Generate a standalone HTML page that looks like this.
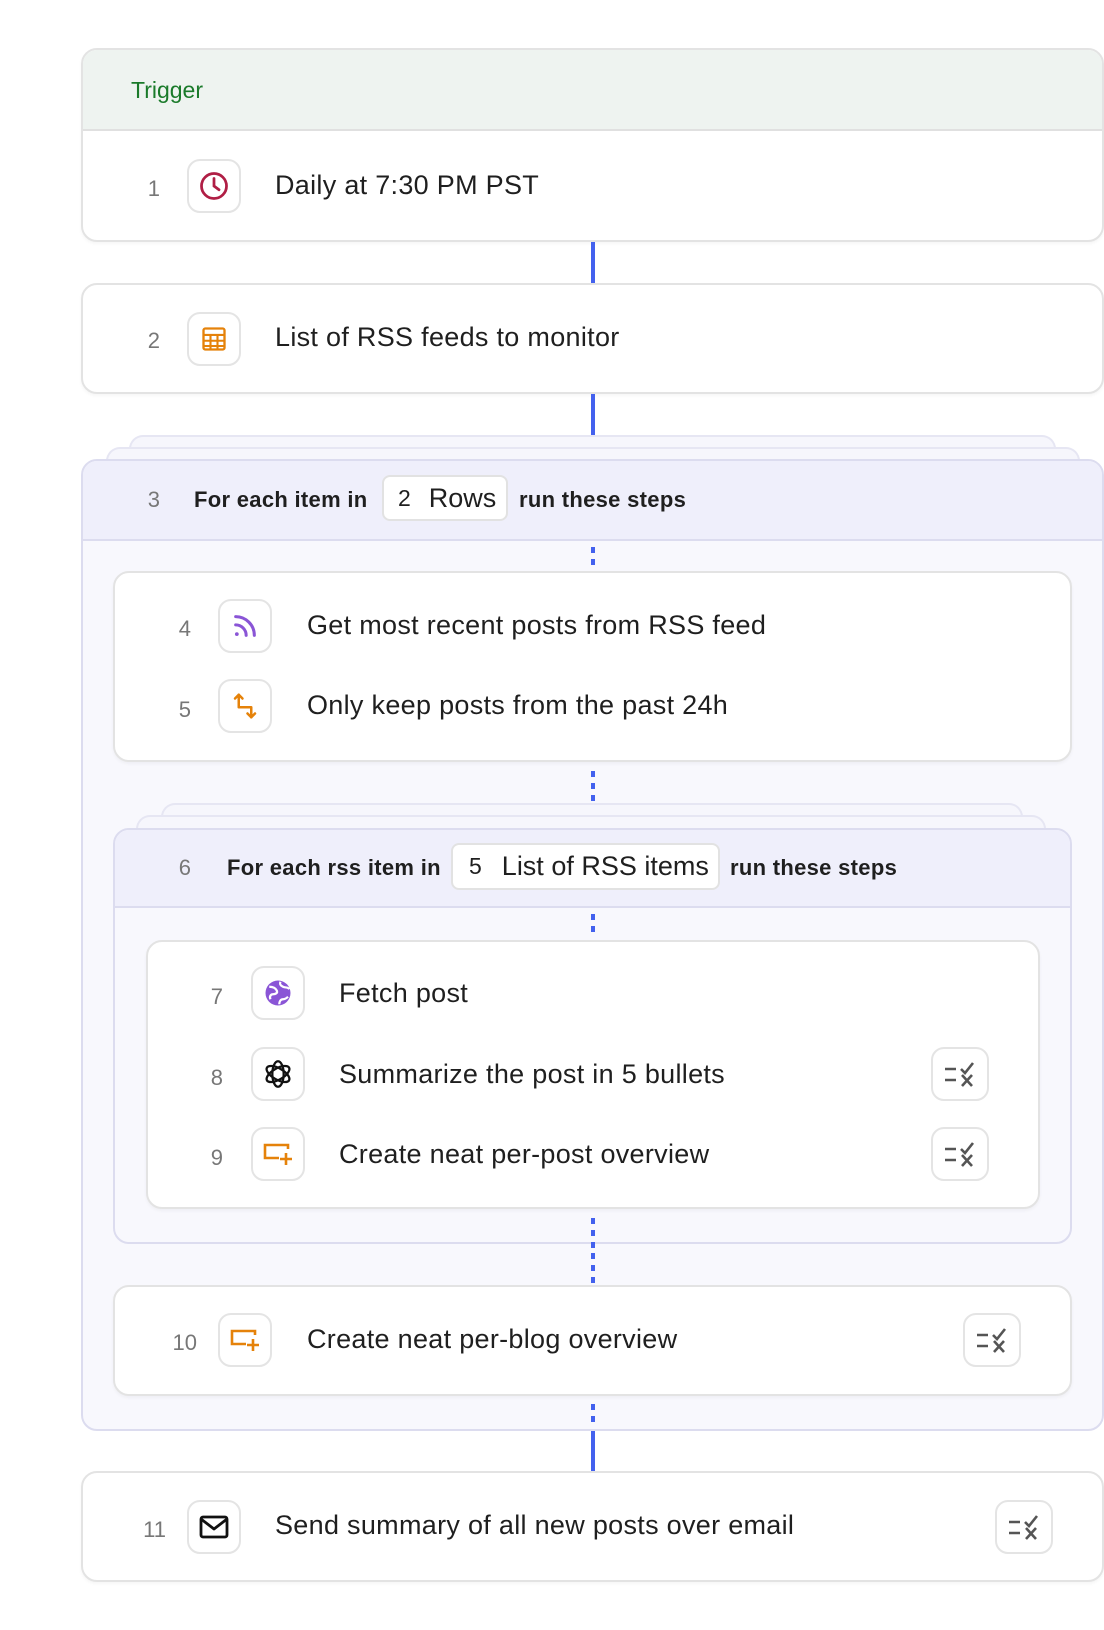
<!DOCTYPE html>
<html><head><meta charset="utf-8"><style>
*{box-sizing:border-box;margin:0;padding:0}
body{width:1104px;height:1630px;background:#fff;position:relative;font-family:"Liberation Sans",sans-serif;color:#1f1f1f;overflow:hidden}
.a{position:absolute}
.card{position:absolute;background:#fff;border:2px solid #e3e3e3;border-radius:16px;box-shadow:0 2px 3px rgba(0,0,0,.04)}
.loop{position:absolute;background:#f8f8fd;border:2px solid #dcdcef;border-radius:16px}
.lh{position:absolute;left:0;right:0;top:0;background:#efeffb;border-bottom:2px solid #dcdcef;border-radius:14px 14px 0 0}
.ghost{position:absolute;background:#f6f6fc;border:2px solid #e6e6f3;border-bottom:none;border-radius:14px 14px 0 0}
.num{position:absolute;font-size:22px;color:#777;text-align:right;width:40px}
.ib{position:absolute;width:54px;height:54px;border:2px solid #e4e4e4;border-radius:13px;background:#fff;display:flex;align-items:center;justify-content:center}
.ab{position:absolute;width:58px;height:54px;border:2px solid #e4e4e4;border-radius:13px;background:#fff;display:flex;align-items:center;justify-content:center}
.t{position:absolute;font-size:27px;letter-spacing:0.3px;color:#1f1f1f;white-space:nowrap}
.line{position:absolute;left:591px;width:4px;background:#4361ee}
.dot{position:absolute;left:591px;width:4px;background:repeating-linear-gradient(#4361ee 0 6px,transparent 6px 12px)}
.hd{position:absolute;font-size:22px;font-weight:bold;color:#1f1f1f;white-space:nowrap;letter-spacing:0.3px}
.pill{position:absolute;background:#fff;border:2px solid #e2e2e2;border-radius:8px;font-size:27px;white-space:nowrap;display:flex;align-items:center}
</style></head><body>

<div class="card" style="left:81px;top:48px;width:1023px;height:194px;overflow:hidden">
 <div class="a" style="left:0;right:0;top:0;height:81px;background:#eef3f0;border-bottom:2px solid #e0e0e0"></div>
 <div class="a" style="left:48px;top:27px;font-size:23px;color:#1a7a2a">Trigger</div>
</div>
<div class="num" style="left:120px;top:176px">1</div>
<div class="ib" style="left:187px;top:159px"><svg width="30" height="30" viewBox="0 0 24 24" fill="none" stroke="#b01e45" stroke-width="2.2" stroke-linecap="round"><circle cx="12" cy="12" r="10"/><path d="M12 6v6l4 3"/></svg></div>
<div class="t" style="left:275px;top:170px">Daily at 7:30 PM PST</div>

<div class="line" style="top:242px;height:41px"></div>

<div class="card" style="left:81px;top:283px;width:1023px;height:111px"></div>
<div class="num" style="left:120px;top:328px">2</div>
<div class="ib" style="left:187px;top:312px"><svg width="28" height="28" viewBox="0 0 24 24" fill="none" stroke="#e5820a" stroke-width="2"><rect x="3" y="3" width="18" height="18" rx="1.5"/><path d="M3 8.5h18M3 13.5h18M3 18h18M9 8.5v12.5M15 8.5v12.5" stroke-width="1.8"/></svg></div>
<div class="t" style="left:275px;top:322px">List of RSS feeds to monitor</div>

<div class="line" style="top:394px;height:42px"></div>

<div class="ghost" style="left:129px;top:435px;width:927px;height:30px"></div>
<div class="ghost" style="left:106px;top:447px;width:974px;height:30px"></div>
<div class="loop" style="left:81px;top:459px;width:1023px;height:972px">
 <div class="lh" style="height:80px"></div>
</div>
<div class="num" style="left:120px;top:487px">3</div>
<div class="hd" style="left:194px;top:487px">For each item in</div>
<div class="pill" style="left:382px;top:475px;width:126px;height:46px"><span style="margin-left:14px;font-size:23px">2</span><span style="margin-left:18px">Rows</span></div>
<div class="hd" style="left:519px;top:487px">run these steps</div>

<div class="dot" style="top:547px;height:18px"></div>

<div class="card" style="left:113px;top:571px;width:959px;height:191px"></div>
<div class="num" style="left:151px;top:616px">4</div>
<div class="ib" style="left:218px;top:599px"><svg width="28" height="28" viewBox="0 0 24 24" fill="none" stroke="#8a55d6" stroke-width="2.6" stroke-linecap="round"><path d="M4 4a16 16 0 0 1 16 16"/><path d="M4 11a9 9 0 0 1 9 9"/><circle cx="5" cy="19" r="1.6" fill="#8a55d6" stroke="none"/></svg></div>
<div class="t" style="left:307px;top:610px">Get most recent posts from RSS feed</div>
<div class="num" style="left:151px;top:697px">5</div>
<div class="ib" style="left:218px;top:679px"><svg width="30" height="30" viewBox="0 0 24 24" fill="none" stroke="#e5820a" stroke-width="2" stroke-linecap="round" stroke-linejoin="round"><path d="M7 3v10h10v8"/><path d="M4 6l3-3 3 3"/><path d="M14 18l3 3 3-3"/></svg></div>
<div class="t" style="left:307px;top:690px">Only keep posts from the past 24h</div>

<div class="dot" style="top:771px;height:30px"></div>

<div class="ghost" style="left:161px;top:803px;width:862px;height:30px"></div>
<div class="ghost" style="left:136px;top:815px;width:910px;height:30px"></div>
<div class="loop" style="left:113px;top:828px;width:959px;height:416px">
 <div class="lh" style="height:78px"></div>
</div>
<div class="num" style="left:151px;top:855px">6</div>
<div class="hd" style="left:227px;top:855px">For each rss item in</div>
<div class="pill" style="left:451px;top:843px;width:269px;height:47px"><span style="margin-left:16px;font-size:23px">5</span><span style="margin-left:20px">List of RSS items</span></div>
<div class="hd" style="left:730px;top:855px">run these steps</div>

<div class="dot" style="top:914px;height:18px"></div>

<div class="card" style="left:146px;top:940px;width:894px;height:269px"></div>
<div class="num" style="left:183px;top:984px">7</div>
<div class="ib" style="left:251px;top:966px"><svg width="30" height="30" viewBox="0 0 24 24"><circle cx="12" cy="12" r="10" fill="#8a55d6"/><path d="M5 7c3 0 5 1 6 3s-1 3-3 3-3 2-2 4M14 3c-1 2 0 3 2 4s4 0 5 2M13 21c0-2 1-4 3-4s3-1 4-2" fill="none" stroke="#fff" stroke-width="1.8"/></svg></div>
<div class="t" style="left:339px;top:978px">Fetch post</div>
<div class="num" style="left:183px;top:1065px">8</div>
<div class="ib" style="left:251px;top:1047px"><svg width="34" height="34" viewBox="0 0 24 24" fill="none" stroke="#111" stroke-width="1.6"><g transform="translate(12 12)"><ellipse rx="4" ry="9"/><ellipse rx="4" ry="9" transform="rotate(60)"/><ellipse rx="4" ry="9" transform="rotate(120)"/></g></svg></div>
<div class="t" style="left:339px;top:1059px">Summarize the post in 5 bullets</div>
<div class="ab" style="left:931px;top:1047px"><svg width="34" height="28" viewBox="0 0 34 28" fill="none" stroke="#555" stroke-width="2.6"><path d="M2 9h11M2 20h11M18 9l4 4 8-10M19 15l10 11M29 15L19 26"/></svg></div>
<div class="num" style="left:183px;top:1145px">9</div>
<div class="ib" style="left:251px;top:1127px"><svg width="32" height="24" viewBox="0 0 32 24" fill="none" stroke="#e5820a" stroke-width="2.6"><path d="M26 7V3H3v13h14M24 11v12M18 17h12"/></svg></div>
<div class="t" style="left:339px;top:1139px">Create neat per-post overview</div>
<div class="ab" style="left:931px;top:1127px"><svg width="34" height="28" viewBox="0 0 34 28" fill="none" stroke="#555" stroke-width="2.6"><path d="M2 9h11M2 20h11M18 9l4 4 8-10M19 15l10 11M29 15L19 26"/></svg></div>

<div class="dot" style="top:1218px;height:30px"></div>
<div class="dot" style="top:1253px;height:30px"></div>

<div class="card" style="left:113px;top:1285px;width:959px;height:111px"></div>
<div class="num" style="left:157px;top:1330px">10</div>
<div class="ib" style="left:218px;top:1313px"><svg width="32" height="24" viewBox="0 0 32 24" fill="none" stroke="#e5820a" stroke-width="2.6"><path d="M26 7V3H3v13h14M24 11v12M18 17h12"/></svg></div>
<div class="t" style="left:307px;top:1324px">Create neat per-blog overview</div>
<div class="ab" style="left:963px;top:1313px"><svg width="34" height="28" viewBox="0 0 34 28" fill="none" stroke="#555" stroke-width="2.6"><path d="M2 9h11M2 20h11M18 9l4 4 8-10M19 15l10 11M29 15L19 26"/></svg></div>

<div class="dot" style="top:1404px;height:18px"></div>
<div class="line" style="top:1431px;height:40px"></div>

<div class="card" style="left:81px;top:1471px;width:1023px;height:111px"></div>
<div class="num" style="left:126px;top:1517px">11</div>
<div class="ib" style="left:187px;top:1500px"><svg width="30" height="26" viewBox="0 0 30 26" fill="none" stroke="#111" stroke-width="2.8" stroke-linejoin="round"><rect x="2" y="3" width="26" height="20" rx="2"/><path d="M2 5l13 10L28 5"/></svg></div>
<div class="t" style="left:275px;top:1510px">Send summary of all new posts over email</div>
<div class="ab" style="left:995px;top:1500px"><svg width="34" height="28" viewBox="0 0 34 28" fill="none" stroke="#555" stroke-width="2.6"><path d="M2 9h11M2 20h11M18 9l4 4 8-10M19 15l10 11M29 15L19 26"/></svg></div>

</body></html>
